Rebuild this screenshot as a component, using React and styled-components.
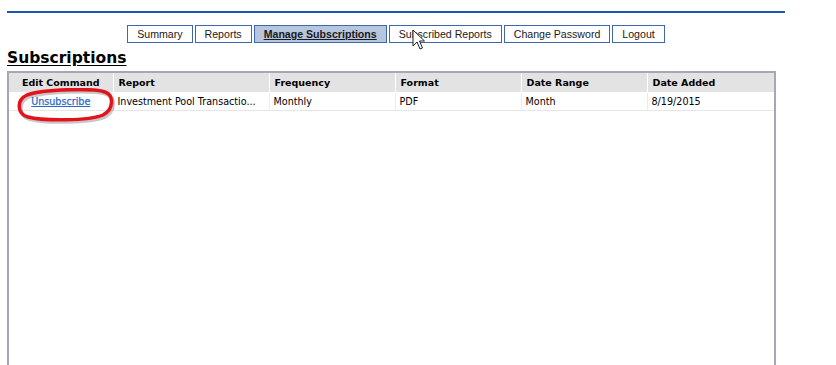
import React from 'react';
import styled, { createGlobalStyle } from 'styled-components';

const GlobalStyle = createGlobalStyle`
  html, body {
    margin: 0;
    padding: 0;
    background: #fff;
    overflow: hidden;
  }
  body {
    font-family: 'DejaVu Sans', Verdana, sans-serif;
    color: #000;
  }
`;

const Page = styled.div`
  position: relative;
  width: 778px;
  height: 354px;
  padding-top: 11px;
  margin-left: 7px;
`;

const TopRule = styled.div`
  height: 2px;
  background: #1f57a8;
`;

const TabBar = styled.nav`
  display: flex;
  justify-content: center;
  gap: 2px;
  margin-top: 12px;
`;

const Tab = styled.a`
  display: flex;
  align-items: center;
  box-sizing: border-box;
  height: 18px;
  padding: 0 9px;
  border: 1px solid #3d68b0;
  background: ${p => (p.$active ? '#b6c6df' : '#fff')};
  font-family: 'Liberation Sans', Arial, sans-serif;
  font-size: 10.6px;
  font-weight: ${p => (p.$active ? 700 : 400)};
  text-decoration: ${p => (p.$active ? 'underline' : 'none')};
  color: #1a1a1a;
`;

const Title = styled.h1`
  margin: 5px 0 0;
  font-family: 'DejaVu Sans', Verdana, sans-serif;
  font-size: 15.5px;
  line-height: 20px;
  font-weight: 700;
  text-decoration: underline;
  text-underline-offset: 2px;
`;

const Grid = styled.div`
  box-sizing: border-box;
  width: 769px;
  height: 300px;
  margin-top: 3px;
  border: 2px solid #a6a6b6;
  border-bottom: none;
`;

const Table = styled.table`
  width: 100%;
  table-layout: fixed;
  border-collapse: collapse;
  font-size: 9.6px;
`;

const HeadCell = styled.th`
  height: 19px;
  padding: 0 0 0 ${p => (p.$center ? 0 : 5)}px;
  background: #e3e3e3;
  border-right: 1px solid #fff;
  border-bottom: 1px solid #fff;
  text-align: ${p => (p.$center ? 'center' : 'left')};
  font-weight: 700;
  font-size: 9.5px;
  white-space: nowrap;
  &:last-child {
    border-right: none;
  }
`;

const Cell = styled.td`
  height: 17px;
  padding: 0 0 0 ${p => (p.$center ? 0 : 4)}px;
  border-right: 1px solid #ececec;
  border-bottom: 1px solid #e6e6e6;
  text-align: ${p => (p.$center ? 'center' : 'left')};
  white-space: nowrap;
  overflow: hidden;
  &:last-child {
    border-right: none;
  }
`;

const Link = styled.a`
  color: #2a6bc9;
  text-decoration: underline;
  -webkit-text-stroke: 0.25px #2a6bc9;
`;

const Mark = styled.svg`
  position: absolute;
  left: 6px;
  top: 88px;
  pointer-events: none;
`;

const Pointer = styled.svg`
  position: absolute;
  left: 405px;
  top: 29px;
  pointer-events: none;
`;

const tabs = [
  'Summary',
  'Reports',
  'Manage Subscriptions',
  'Subscribed Reports',
  'Change Password',
  'Logout',
];

const columns = [
  { label: 'Edit Command', width: 104, center: true },
  { label: 'Report', width: 156 },
  { label: 'Frequency', width: 126 },
  { label: 'Format', width: 126 },
  { label: 'Date Range', width: 126 },
  { label: 'Date Added' },
];

const rows = [
  {
    report: 'Investment Pool Transactio...',
    frequency: 'Monthly',
    format: 'PDF',
    range: 'Month',
    added: '8/19/2015',
  },
];

const ovalPath =
  'M14 7 C30 1, 80 0, 92 4 C101 7, 101 21, 90 27 C76 33, 30 33, 15 29 C4 26, 3 12, 14 7 Z';

export default function App() {
  return (
    <Page>
      <GlobalStyle />
      <TopRule />
      <TabBar>
        {tabs.map(t => (
          <Tab key={t} $active={t === 'Manage Subscriptions'}>
            {t}
          </Tab>
        ))}
      </TabBar>
      <Title>Subscriptions</Title>
      <Grid>
        <Table>
          <colgroup>
            {columns.map(c => (
              <col key={c.label} style={c.width ? { width: c.width } : undefined} />
            ))}
          </colgroup>
          <thead>
            <tr>
              {columns.map(c => (
                <HeadCell key={c.label} $center={c.center}>
                  {c.label}
                </HeadCell>
              ))}
            </tr>
          </thead>
          <tbody>
            {rows.map(r => (
              <tr key={r.report}>
                <Cell $center>
                  <Link>Unsubscribe</Link>
                </Cell>
                <Cell>{r.report}</Cell>
                <Cell>{r.frequency}</Cell>
                <Cell>{r.format}</Cell>
                <Cell>{r.range}</Cell>
                <Cell>{r.added}</Cell>
              </tr>
            ))}
          </tbody>
        </Table>
      </Grid>

      <Mark width="104" height="38" viewBox="0 0 104 38">
        <path
          d={ovalPath}
          fill="none"
          stroke="rgba(0,0,0,0.22)"
          strokeWidth="4"
          transform="translate(1.5 2)"
        />
        <path d={ovalPath} fill="none" stroke="#e3131c" strokeWidth="3.5" />
      </Mark>

      <Pointer width="14" height="22" viewBox="0 0 14 22">
        <path
          d="M1 1 L1 17 L5 13 L8 20 L10.5 19 L7.5 12 L12.5 12 Z"
          fill="#fff"
          stroke="#222"
          strokeWidth="1"
          strokeLinejoin="round"
        />
      </Pointer>
    </Page>
  );
}
